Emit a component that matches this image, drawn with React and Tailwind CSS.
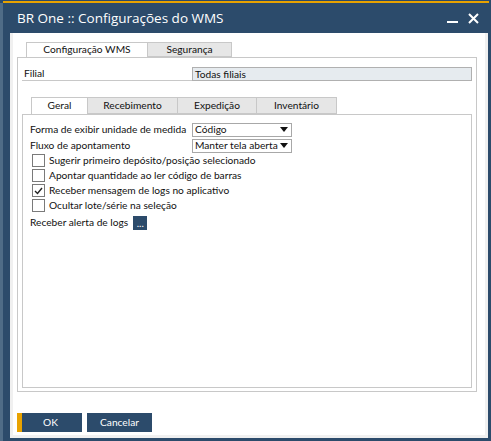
export default function App() {
  const font = { fontFamily: 'Lato, "Open Sans", sans-serif' };
  const Check = ({ checked, label }) => (
    <div className="flex items-center h-[15px] whitespace-nowrap">
      <div className="ml-[2px] w-[13px] h-[13px] border border-[#7a7a7a] bg-white flex items-center justify-center shrink-0">
        {checked && (
          <svg width="9" height="8" viewBox="0 0 9 8">
            <path d="M1 4 L3.5 6.5 L8 1" fill="none" stroke="#222" strokeWidth="1.4" />
          </svg>
        )}
      </div>
      <span className="ml-[4px]">{label}</span>
    </div>
  );
  const Select = ({ value }) => (
    <div className="w-[100px] h-[14px] border border-[#a8a8a8] bg-white flex items-center justify-between pl-[2px] pr-[3px] whitespace-nowrap">
      <span className="leading-none">{value}</span>
      <svg width="8" height="5" viewBox="0 0 8 5"><path d="M0 0 H8 L4 5 Z" fill="#111" /></svg>
    </div>
  );
  return (
    <div className="w-[491px] h-[441px] bg-[#2c4b6b] flex flex-col text-[10.2px] text-[#111]" style={font}>
      <div className="h-[1px] bg-[#2c4b6b]" />
      <div className="h-[2px] ml-[3px] mr-[2px] bg-[#e8a200]" />
      <div className="flex flex-1">
        <div className="w-[3px] bg-[#4f6c87]" />
        <div className="flex-1 flex flex-col">
          <div className="h-[30px] flex items-center pl-[14px] pr-[12px] text-white">
            <span className="text-[13.5px]" style={{ fontFamily: '"Open Sans", sans-serif' }}>BR One :: Configurações do WMS</span>
            <div className="ml-auto flex items-center gap-[10px]">
              <svg width="11" height="11" viewBox="0 0 11 11"><rect x="0" y="8" width="11" height="2" fill="#fff" /></svg>
              <svg width="11" height="11" viewBox="0 0 11 11"><path d="M1 1 L10 10 M10 1 L1 10" stroke="#fff" strokeWidth="2" /></svg>
            </div>
          </div>
          <div className="ml-[7px] mr-[3px] mb-[3px] flex-1 bg-white border-l-[3px] border-r-[3px] border-b-[3px] border-[#f0f0f0] flex flex-col pl-[4px] pr-[8px]">
            {/* outer tabs */}
            <div className="flex mt-[9px] ml-[9px] h-[15px] whitespace-nowrap">
              <div className="w-[122px] border border-b-0 border-[#c8c8c8] bg-white flex items-center justify-center">Configuração WMS</div>
              <div className="w-[84px] border border-l-0 border-[#c8c8c8] bg-[#e6e6e6] flex items-center justify-center">Segurança</div>
            </div>
            <div className="flex-1 border border-[#c8c8c8] flex flex-col px-[4px] mb-[21px]">
              <div className="flex items-end mt-[9px] h-[14px]">
                <div className="w-[170px] h-[14px] border-b border-[#c8c8c8] pl-[2px] leading-[13px]">Filial</div>
                <div className="flex-1 h-[14px] border border-[#b0b0b0] bg-[#e6ebef] pl-[2px] leading-[12px]">Todas filiais</div>
              </div>
              {/* inner tabs */}
              <div className="flex mt-[16px] ml-[9px] h-[17px] whitespace-nowrap">
                <div className="w-[57px] border border-b-0 border-[#c8c8c8] bg-white flex items-center justify-center">Geral</div>
                <div className="w-[90px] border border-l-0 border-[#c8c8c8] bg-[#e6e6e6] flex items-center justify-center">Recebimento</div>
                <div className="w-[79px] border border-l-0 border-[#c8c8c8] bg-[#e6e6e6] flex items-center justify-center">Expedição</div>
                <div className="w-[80px] border border-l-0 border-[#c8c8c8] bg-[#e6e6e6] flex items-center justify-center">Inventário</div>
              </div>
              <div className="flex-1 border border-[#c8c8c8] mb-[3px] pl-[7px] pt-[7px] flex flex-col">
                <div className="flex items-center h-[15px] whitespace-nowrap">
                  <span className="w-[162px]">Forma de exibir unidade de medida</span>
                  <Select value="Código" />
                </div>
                <div className="flex items-center h-[15px] mt-[1px] whitespace-nowrap">
                  <span className="w-[162px]">Fluxo de apontamento</span>
                  <Select value="Manter tela aberta" />
                </div>
                <Check label="Sugerir primeiro depósito/posição selecionado" />
                <Check label="Apontar quantidade ao ler código de barras" />
                <Check checked label="Receber mensagem de logs no aplicativo" />
                <Check label="Ocultar lote/série na seleção" />
                <div className="flex items-center h-[16px] mt-[2px] whitespace-nowrap">
                  <span>Receber alerta de logs</span>
                  <div className="ml-[5px] w-[14px] h-[14px] bg-[#2c4b6b] text-white flex items-center justify-center leading-none text-[10px]">...</div>
                </div>
              </div>
            </div>
            <div className="flex gap-[5px] mb-[3px] whitespace-nowrap">
              <div className="w-[65px] h-[19px] bg-[#2c4b6b] text-white flex items-center border-l-[5px] border-[#e8a200]">
                <span className="flex-1 text-center pr-[3px]">OK</span>
              </div>
              <div className="w-[65px] h-[19px] bg-[#2c4b6b] text-white flex items-center justify-center">Cancelar</div>
            </div>
          </div>
        </div>
      </div>
    </div>
  );
}
